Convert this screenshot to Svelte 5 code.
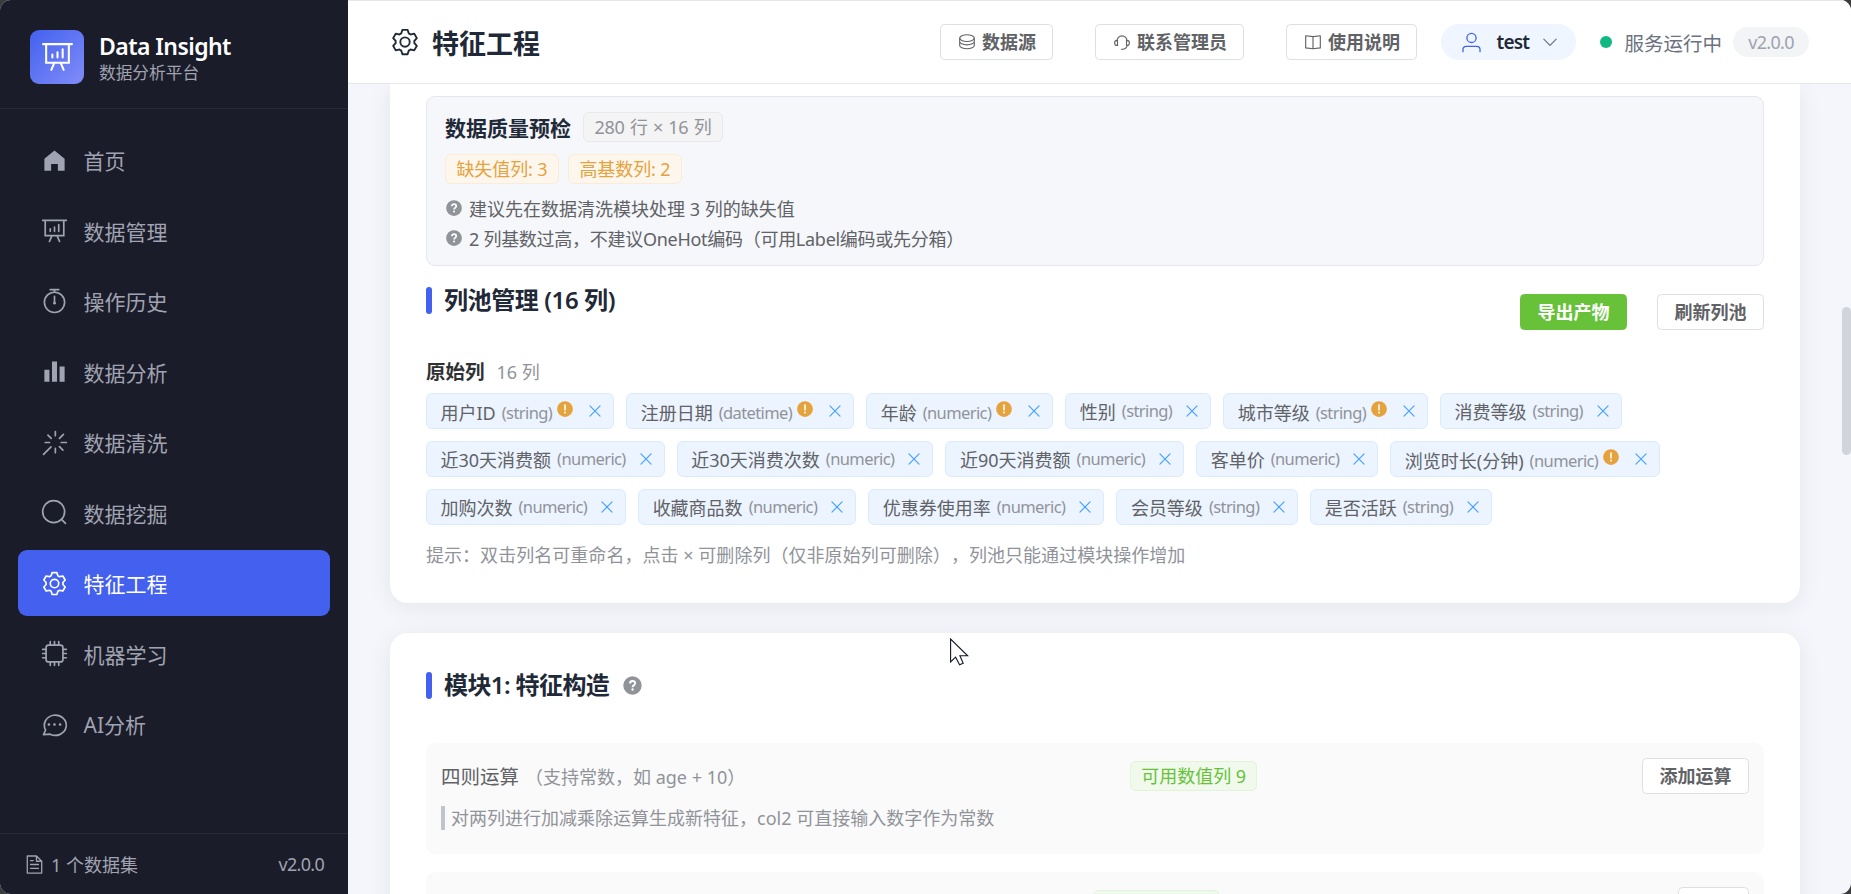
<script>
	const menus = [
		{ icon: 'home', name: '首页' },
		{ icon: 'board', name: '数据管理' },
		{ icon: 'timer', name: '操作历史' },
		{ icon: 'bars', name: '数据分析' },
		{ icon: 'magic', name: '数据清洗' },
		{ icon: 'search', name: '数据挖掘' },
		{ icon: 'setting', name: '特征工程' },
		{ icon: 'cpu', name: '机器学习' },
		{ icon: 'chat', name: 'AI分析' }
	];
	let active = $state('特征工程');

	const links = [
		{ icon: 'coin', name: '数据源' },
		{ icon: 'service', name: '联系管理员' },
		{ icon: 'reading', name: '使用说明' }
	];

	const tips = [
		'建议先在数据清洗模块处理 3 列的缺失值',
		'2 列基数过高，不建议OneHot编码（可用Label编码或先分箱）'
	];

	const columnRows = [
		[
			{ name: '用户ID', type: 'string', warn: true },
			{ name: '注册日期', type: 'datetime', warn: true },
			{ name: '年龄', type: 'numeric', warn: true },
			{ name: '性别', type: 'string' },
			{ name: '城市等级', type: 'string', warn: true },
			{ name: '消费等级', type: 'string' }
		],
		[
			{ name: '近30天消费额', type: 'numeric' },
			{ name: '近30天消费次数', type: 'numeric' },
			{ name: '近90天消费额', type: 'numeric' },
			{ name: '客单价', type: 'numeric' },
			{ name: '浏览时长(分钟)', type: 'numeric', warn: true }
		],
		[
			{ name: '加购次数', type: 'numeric' },
			{ name: '收藏商品数', type: 'numeric' },
			{ name: '优惠券使用率', type: 'numeric' },
			{ name: '会员等级', type: 'string' },
			{ name: '是否活跃', type: 'string' }
		]
	];
</script>

{#snippet icon(name)}
	<svg class="icon" viewBox="0 0 1024 1024" fill="none" stroke="currentColor" stroke-width="64">
		{#if name === 'home'}
			<path d="M512 128 128 447.936V896h255.936V640H640v256h255.936V447.936z" fill="currentColor" stroke="none" />
		{:else if name === 'board'}
			<path d="M64 128h896M160 128v576h704V128M416 704 320 928M608 704l96 224M352 448v96M512 384v160M672 288v256" stroke-linecap="round" />
		{:else if name === 'timer'}
			<circle cx="512" cy="544" r="384" />
			<path d="M352 64h320M512 64v96M512 320v256" stroke-linecap="round" />
			<circle cx="512" cy="576" r="52" fill="currentColor" stroke="none" />
		{:else if name === 'bars'}
			<path d="M416 896V128h192v768zm-288 0V448h192v448zm576 0V320h192v576z" fill="currentColor" stroke="none" />
		{:else if name === 'magic'}
			<path d="M544 96v160M544 736v160M768 512h192M160 512h160M700 356l150-150M388 356 262 230M700 668l130 130M380 676 96 960" stroke-linecap="round" />
		{:else if name === 'search'}
			<circle cx="480" cy="480" r="416" />
			<path d="m795 795 133 133" stroke-linecap="round" />
		{:else if name === 'setting'}
			<path fill="currentColor" stroke="none" d="M600.704 64a32 32 0 0 1 30.464 22.208l35.2 109.376c14.784 7.232 28.928 15.36 42.432 24.512l112.384-24.192a32 32 0 0 1 34.432 15.36L944.32 364.8a32 32 0 0 1-4.032 37.504l-77.12 85.12a357.12 357.12 0 0 1 0 49.024l77.12 85.248a32 32 0 0 1 4.032 37.504l-88.704 153.6a32 32 0 0 1-34.432 15.296L708.8 803.904c-13.44 9.088-27.648 17.28-42.368 24.512l-35.264 109.376A32 32 0 0 1 600.704 960H423.296a32 32 0 0 1-30.464-22.208L357.696 828.48a351.616 351.616 0 0 1-42.56-24.64l-112.32 24.256a32 32 0 0 1-34.432-15.36L79.68 659.2a32 32 0 0 1 4.032-37.504l77.12-85.248a357.12 357.12 0 0 1 0-48.896l-77.12-85.248A32 32 0 0 1 79.68 364.8l88.704-153.6a32 32 0 0 1 34.432-15.296l112.32 24.256c13.568-9.152 27.776-17.408 42.56-24.64l35.2-109.312A32 32 0 0 1 423.232 64H600.64zm-23.424 64H446.72l-36.352 113.088-24.512 11.968a294.113 294.113 0 0 0-34.816 20.096l-22.656 15.36-116.224-25.088-65.28 113.152 79.68 88.192-1.92 27.136a293.12 293.12 0 0 0 0 40.192l1.92 27.136-79.808 88.192 65.344 113.152 116.224-25.024 22.656 15.296a294.113 294.113 0 0 0 34.816 20.096l24.512 11.968L446.72 896h130.688l36.48-113.152 24.448-11.904a288.282 288.282 0 0 0 34.752-20.096l22.592-15.296 116.288 25.024 65.28-113.152-79.744-88.192 1.92-27.136a293.12 293.12 0 0 0 0-40.256l-1.92-27.136 79.808-88.128-65.344-113.152-116.288 24.96-22.592-15.232a287.616 287.616 0 0 0-34.752-20.096l-24.448-11.904L577.344 128zM512 320a192 192 0 1 1 0 384 192 192 0 0 1 0-384zm0 64a128 128 0 1 0 0 256 128 128 0 0 0 0-256z" />
		{:else if name === 'cpu'}
			<rect x="192" y="192" width="640" height="640" rx="96" />
			<path d="M512 64v128M352 64v128M672 64v128M512 832v128M352 832v128M672 832v128M64 512h128M64 352h128M64 672h128M832 512h128M832 352h128M832 672h128" stroke-linecap="round" />
		{:else if name === 'chat'}
			<path d="M174 720 96 896 346 880A416 384 0 1 0 174 720z" stroke-linejoin="round" />
			<path d="M300 512h1M512 512h1M724 512h1" stroke-width="104" stroke-linecap="round" />
		{:else if name === 'doc'}
			<path d="M608 96H160v832h704V352L608 96v256h256M320 320h128M320 512h384M320 704h384" stroke-linejoin="round" stroke-linecap="round" />
		{:else if name === 'coin'}
			<ellipse cx="512" cy="288" rx="416" ry="192" />
			<path d="M96 288v192c0 106 186 192 416 192s416-86 416-192V288M96 480v224c0 106 186 192 416 192s416-86 416-192V480" />
		{:else if name === 'service'}
			<path d="M224 448a288 288 0 0 1 576 0M256 416v288h-32a128 128 0 0 1-128-128v-32a128 128 0 0 1 128-128zM768 416v288h32a128 128 0 0 0 128-128v-32a128 128 0 0 0-128-128zM800 704c0 110-96 192-240 224h-64" stroke-linecap="round" />
		{:else if name === 'reading'}
			<path d="M512 192v704M96 160l416 48 416-48v688l-416 48-416-48z" stroke-linejoin="round" />
		{:else if name === 'user'}
			<circle cx="512" cy="288" r="224" />
			<path d="M96 960v-96a160 160 0 0 1 160-160h512a160 160 0 0 1 160 160v96" stroke-linecap="round" />
		{:else if name === 'down'}
			<path d="m160 352 352 352 352-352" stroke-linecap="round" />
		{:else if name === 'close'}
			<path d="m224 224 576 576M800 224 224 800" stroke-linecap="round" />
		{:else if name === 'question'}
			<circle cx="512" cy="512" r="448" fill="currentColor" stroke="none" />
			<path d="M392 410c0-76 52-122 124-122s122 44 122 112c0 56-32 82-68 108-38 26-54 48-54 92" stroke="#fff" stroke-width="96" />
			<circle cx="516" cy="710" r="58" fill="#fff" stroke="none" />
		{:else if name === 'warning'}
			<circle cx="512" cy="512" r="448" fill="currentColor" stroke="none" />
			<path d="M512 290v270" stroke="#fff" stroke-width="92" stroke-linecap="round" />
			<circle cx="512" cy="710" r="56" fill="#fff" stroke="none" />
		{/if}
	</svg>
{/snippet}

<div class="window">
	<aside>
		<div class="brand">
			<div class="logo">{@render icon('board')}</div>
			<div class="brand-text">
				<div class="brand-name">Data Insight</div>
				<div class="brand-sub">数据分析平台</div>
			</div>
		</div>
		<nav>
			{#each menus as menu}
				<button class="menu" class:active={active === menu.name} onclick={() => (active = menu.name)}>
					{@render icon(menu.icon)}
					<span>{menu.name}</span>
				</button>
			{/each}
		</nav>
		<div class="side-foot">
			<span class="datasets">{@render icon('doc')}1 个数据集</span>
			<span class="ver">v2.0.0</span>
		</div>
	</aside>

	<div class="right">
		<header>
			<h1>{@render icon('setting')}<span>特征工程</span></h1>
			<div class="tools">
				{#each links as link}
					<button class="btn">{@render icon(link.icon)}<span>{link.name}</span></button>
				{/each}
			</div>
			<div class="user">{@render icon('user')}<b>test</b><i>{@render icon('down')}</i></div>
			<div class="status"><span class="dot"></span>服务运行中</div>
			<div class="badge">v2.0.0</div>
		</header>

		<main>
			<section class="card pool">
				<div class="precheck">
					<div class="line">
						<strong>数据质量预检</strong>
						<span class="tag info">280 行 × 16 列</span>
					</div>
					<div class="line tags">
						<span class="tag warning">缺失值列: 3</span>
						<span class="tag warning">高基数列: 2</span>
					</div>
					{#each tips as tip}
						<div class="tip">{@render icon('question')}<span>{tip}</span></div>
					{/each}
				</div>

				<div class="pool-head">
					<h2>列池管理 (16 列)</h2>
					<div class="actions">
						<button class="btn success">导出产物</button>
						<button class="btn">刷新列池</button>
					</div>
				</div>

				<div class="group">
					<strong>原始列</strong>
					<span>16 列</span>
				</div>
				{#each columnRows as row}
					<div class="chips">
						{#each row as col}
							<div class="chip" class:warn={col.warn}>
								<span class="label">{col.name}</span>
								<span class="type">({col.type})</span>
								{#if col.warn}<span class="mark">{@render icon('warning')}</span>{/if}
								<span class="close">{@render icon('close')}</span>
							</div>
						{/each}
					</div>
				{/each}
				<p class="hint">提示：双击列名可重命名，点击 × 可删除列（仅非原始列可删除），列池只能通过模块操作增加</p>
			</section>

			<section class="card module">
				<h2>模块1: 特征构造 <span class="help">{@render icon('question')}</span></h2>
				<div class="op">
					<div class="op-head">
						<div class="op-name">四则运算<small>（支持常数，如 age + 10）</small></div>
						<span class="tag ok">可用数值列 9</span>
						<button class="btn">添加运算</button>
					</div>
					<div class="desc">对两列进行加减乘除运算生成新特征，col2 可直接输入数字作为常数</div>
				</div>
				<div class="op">
					<div class="op-head">
						<div class="op-name next"></div>
						<span class="tag ok"></span>
						<button class="btn next-btn" aria-label="next"></button>
					</div>
				</div>
			</section>
		</main>
		<div class="scrollbar"></div>
	</div>

	<svg class="cursor" viewBox="0 0 19 28">
		<path d="M.6 1v23l5-4.800 4 7.600 3.600-1.600-3.300-7.400h7.800z" fill="#fff" stroke="#111827" stroke-width="1.1" />
	</svg>
</div>

<style>
	:global(body) {
		background: #3c3c3c;
	}

	.window {
		position: relative;
		display: flex;
		width: 1851px;
		height: 894px;
		border-radius: 11px;
		overflow: hidden;
		background: #f4f6fb;
		font-family: 'Noto Sans', 'Noto Sans CJK SC', sans-serif;
		font-size: 18px;
		text-spacing-trim: space-all;
		color: #606266;
		box-sizing: border-box;
	}

	.window :global(*) {
		box-sizing: border-box;
	}

	.icon {
		display: block;
		flex: none;
		width: 18px;
		height: 18px;
	}

	button {
		font: inherit;
		cursor: pointer;
	}

	/* sidebar */
	aside {
		display: flex;
		flex-direction: column;
		flex: none;
		width: 348px;
		background: #1a1c29;
		color: #a0a3b1;
	}

	.brand {
		display: flex;
		align-items: center;
		gap: 15px;
		height: 109px;
		padding: 5px 30px 0;
		border-bottom: 1px solid #282a37;
	}

	.logo {
		display: flex;
		align-items: center;
		justify-content: center;
		width: 54px;
		height: 54px;
		border-radius: 9px;
		background: linear-gradient(135deg, #4361ee, #818cf8);
		color: #fff;
	}

	.logo .icon {
		width: 33px;
		height: 33px;
	}

	.brand-text {
		padding-top: 4px;
	}

	.brand-name {
		color: #fff;
		font-size: 23px;
		font-weight: 600;
		line-height: 28px;
		letter-spacing: -0.55px;
	}

	.brand-sub {
		font-size: 16.7px;
		line-height: 26px;
	}

	nav {
		display: flex;
		flex-direction: column;
		gap: 4.5px;
		flex: 1;
		padding: 18px;
	}

	.menu {
		display: flex;
		align-items: center;
		gap: 16px;
		height: 66px;
		padding: 0 22.5px;
		border: 0;
		border-radius: 9px;
		background: none;
		color: inherit;
		font-size: 21px;
	}

	.menu .icon {
		width: 27px;
		height: 27px;
	}

	.menu.active {
		background: #4361ee;
		color: #fff;
	}

	.side-foot {
		display: flex;
		align-items: center;
		justify-content: space-between;
		height: 61px;
		padding: 0 24px;
		border-top: 1px solid #282a37;
	}

	.datasets {
		display: flex;
		align-items: center;
		gap: 6px;
	}

	.datasets .icon {
		width: 21px;
		height: 21px;
	}

	.ver {
		letter-spacing: -0.7px;
	}

	/* header */
	.right {
		position: relative;
		display: flex;
		flex-direction: column;
		flex: 1;
		min-width: 0;
	}

	header {
		display: flex;
		align-items: center;
		flex: none;
		height: 84px;
		padding: 0 42px;
		background: #fff;
		border-top: 1px solid #e6e6e8;
		border-bottom: 1px solid #e5e7eb;
	}

	h1 {
		display: flex;
		align-items: center;
		gap: 12px;
		flex: 1;
		margin: 0;
		color: #1f2937;
		font-size: 27px;
		font-weight: 700;
	}

	h1 .icon {
		width: 30px;
		height: 30px;
	}

	.tools {
		display: flex;
		gap: 42px;
	}

	.btn {
		display: flex;
		align-items: center;
		justify-content: center;
		gap: 6px;
		height: 36px;
		padding: 0 16.5px 2px;
		border: 1px solid #dcdfe6;
		border-radius: 4.5px;
		background: #fff;
		color: #606266;
		font-weight: 600;
		white-space: nowrap;
	}

	.btn .icon {
		position: relative;
		top: 1px;
	}

	.btn.success {
		background: #67c23a;
		border-color: #67c23a;
		color: #fff;
	}

	.user {
		display: flex;
		align-items: center;
		width: 135px;
		height: 36px;
		margin-left: 24px;
		padding-left: 20px;
		border-radius: 18px;
		background: #eff6ff;
		color: #4361ee;
	}

	.user .icon {
		width: 21px;
		height: 21px;
	}

	.user b {
		width: 34px;
		margin-left: 14px;
		color: #1f2937;
		font-size: 19px;
		font-weight: 600;
		letter-spacing: -0.8px;
	}

	.user i {
		margin-left: 11px;
		color: #6b7280;
	}

	.user i .icon {
		width: 18px;
		height: 18px;
	}

	.status {
		display: flex;
		align-items: center;
		gap: 12px;
		margin-left: 24px;
		color: #6b7280;
		font-size: 19.5px;
	}

	.dot {
		width: 12px;
		height: 12px;
		border-radius: 50%;
		background: #10b981;
	}

	.badge {
		width: 76px;
		height: 30px;
		margin-left: 11px;
		border-radius: 15px;
		background: #f3f4f6;
		color: #9ca3af;
		line-height: 30px;
		text-align: center;
		letter-spacing: -0.7px;
	}

	/* content */
	main {
		flex: 1;
		min-height: 0;
		padding: 0 51px 0 42px;
		overflow: hidden;
	}

	.card {
		background: #fff;
		border-radius: 18px;
		padding: 0 36px;
		box-shadow: 0 4px 24px rgba(31, 35, 60, 0.07);
	}

	.pool {
		height: 519px;
		padding-top: 12px;
		border-top-left-radius: 0;
		border-top-right-radius: 0;
	}

	.precheck {
		height: 170px;
		padding: 15px 18px;
		border: 1px solid #e4e7ed;
		border-radius: 9px;
		background: #f5f7fb;
	}

	.line {
		display: flex;
		align-items: center;
		gap: 12px;
		height: 30px;
	}

	.line strong {
		color: #1f2937;
		font-size: 21px;
	}

	.line.tags {
		gap: 9px;
		margin: 12px 0 9px;
	}

	.tag {
		display: flex;
		align-items: center;
		justify-content: center;
		height: 30px;
		padding: 0 11px 2px;
		border: 1px solid;
		border-radius: 6px;
		white-space: nowrap;
	}

	.tag.info {
		width: 140px;
		background: #f4f4f5;
		border-color: #e9e9eb;
		color: #909399;
		letter-spacing: -0.3px;
		word-spacing: 1px;
	}

	.tag.warning {
		width: 114px;
		background: #fdf6ec;
		border-color: #faecd8;
		color: #e6a23c;
		letter-spacing: -0.1px;
	}

	.tag.ok {
		width: 127px;
		background: #f0f9eb;
		border-color: #e1f3d8;
		color: #67c23a;
	}

	.tip {
		display: flex;
		align-items: center;
		gap: 6px;
		height: 30px;
		padding-bottom: 1px;
		white-space: nowrap;
	}

	.tip .icon {
		color: #909399;
	}

	.tip:last-child {
		letter-spacing: -0.28px;
	}

	h2 {
		display: flex;
		align-items: center;
		margin: 0;
		color: #1f2937;
		font-size: 24px;
		font-weight: 600;
		line-height: 32px;
		letter-spacing: -0.4px;
	}

	h2::before {
		content: '';
		width: 6px;
		height: 27px;
		margin-right: 12px;
		border-radius: 3px;
		background: #4361ee;
	}

	.pool-head {
		display: flex;
		align-items: flex-start;
		justify-content: space-between;
		padding-top: 18px;
		height: 88px;
	}

	.actions {
		display: flex;
		gap: 30px;
		padding-top: 10px;
	}

	.group {
		display: flex;
		align-items: center;
		gap: 12px;
		height: 36px;
		padding-bottom: 3px;
		color: #909399;
	}

	.group strong {
		color: #303133;
		font-size: 19.5px;
	}

	.group + .chips {
		margin-top: 3px;
	}

	.chips {
		display: flex;
		gap: 12px;
		margin-bottom: 12px;
	}

	.chip {
		display: flex;
		align-items: center;
		height: 36px;
		padding: 0 9px 1px 13.5px;
		border: 1px solid #d9ecff;
		border-radius: 6px;
		background: #ecf4ff;
		white-space: nowrap;
	}

	.chip.warn .label,
	.chip.warn .type {
		padding-top: 3px;
	}

	.type {
		margin-left: 6px;
		color: #909399;
		font-size: 16.5px;
		letter-spacing: -0.6px;
	}

	.mark {
		margin: -3px 1px 0 4px;
		color: #e6a23c;
	}

	.close {
		margin-left: 11px;
		color: #409eff;
	}

	.hint {
		margin: 17px 0 0;
		line-height: 26px;
		color: #909399;
		white-space: nowrap;
		letter-spacing: 0.04px;
	}

	.module {
		height: 400px;
		margin-top: 30px;
		padding-top: 36px;
	}

	.module h2 {
		letter-spacing: -0.6px;
	}

	.help {
		margin-left: 13px;
		color: #909399;
	}

	.help .icon {
		width: 21px;
		height: 21px;
	}

	.op {
		height: 111px;
		margin-bottom: 18px;
		padding: 15px;
		border-radius: 9px;
		background: #fafafa;
	}

	h2 + .op {
		margin-top: 42px;
	}

	.op-head {
		display: flex;
		align-items: center;
		justify-content: space-between;
	}

	.op-name {
		padding-bottom: 2px;
		font-size: 19.5px;
	}

	.op-name small {
		margin-left: 6px;
		color: #909399;
		font-size: 18px;
	}

	.op-name.next {
		width: 194px;
	}

	.next-btn {
		width: 71px;
	}

	.desc {
		margin-top: 12px;
		padding-left: 6px;
		border-left: 4px solid #c0c4cc;
		color: #909399;
		line-height: 24px;
	}

	.scrollbar {
		position: absolute;
		top: 307px;
		right: 0;
		width: 9px;
		height: 148px;
		border-radius: 4.5px;
		background: #d1d5db;
	}

	.cursor {
		position: absolute;
		left: 950px;
		top: 638px;
		width: 19px;
		height: 28px;
	}
</style>
